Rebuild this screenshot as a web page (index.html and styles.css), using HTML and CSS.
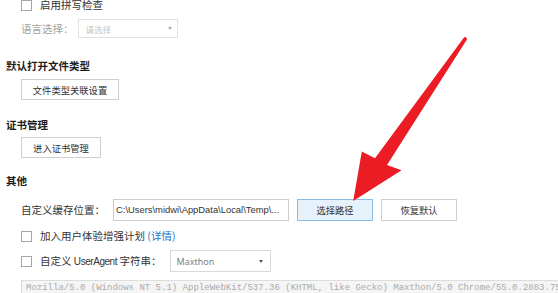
FILE: index.html
```html
<!DOCTYPE html>
<html lang="zh-CN">
<head>
<meta charset="utf-8">
<title>设置</title>
<link rel="stylesheet" href="styles.css">
</head>
<body>
<div class="page">
  <div class="check-row row-spell">
    <span class="checkbox"></span>
    <span class="label">启用拼写检查</span>
  </div>
  <div class="field-row lang-row">
    <span class="label muted">语言选择：</span>
    <div class="select select-disabled">
      <span class="select-text">请选择</span>
      <span class="caret"></span>
    </div>
  </div>

  <div class="heading h-first">默认打开文件类型</div>
  <div class="btn-row"><button class="btn btn-wide">文件类型关联设置</button></div>

  <div class="heading">证书管理</div>
  <div class="btn-row"><button class="btn btn-cert">进入证书管理</button></div>

  <div class="heading h-other">其他</div>
  <div class="field-row cache-row">
    <span class="label">自定义缓存位置：</span>
    <div class="path-input">C:\Users\midwi\AppData\Local\Temp\...</div>
    <button class="btn btn-path btn-primary">选择路径</button>
    <button class="btn btn-path">恢复默认</button>
  </div>
  <div class="check-row row-plan">
    <span class="checkbox"></span>
    <span class="label">加入用户体验增强计划 <a class="link">(详情)</a></span>
  </div>
  <div class="check-row row-ua">
    <span class="checkbox"></span>
    <span class="label">自定义 <span class="latin">UserAgent</span> 字符串：</span>
    <div class="select select-ua">
      <span class="select-text">Maxthon</span>
      <span class="caret caret-dark"></span>
    </div>
  </div>
  <div class="ua-box">Mozilla/5.0 (Windows NT 5.1) AppleWebKit/537.36 (KHTML, like Gecko) Maxthon/5.0 Chrome/55.0.2883.75 Safari/537.36</div>
</div>

<svg class="arrow" width="558" height="293" viewBox="0 0 558 293" aria-hidden="true">
  <path d="M463.6 37.9 A1.8 1.8 0 0 1 466.6 40.1 L387 165 L401.5 170.2 L353.2 201 L361.8 151.6 L375 158.2 Z" fill="#ec1c24"/>
</svg>
</body>
</html>
```

FILE: styles.css
```css
html, body {
  margin: 0;
  padding: 0;
  width: 558px;
  height: 293px;
  overflow: hidden;
  background: #ffffff;
}

body {
  position: relative;
  font-family: "Noto Sans CJK SC", "Noto Sans", sans-serif;
  font-size: 10.5px;
  color: #333333;
}

.page {
  display: flex;
  flex-direction: column;
  margin-top: -3px;
  padding-left: 6px;
}

.check-row {
  display: flex;
  align-items: center;
  height: 16px;
  padding-left: 15px;
}

.checkbox {
  width: 9px;
  height: 9px;
  border: 1px solid #a6a6a6;
  background: #fff;
  margin-right: 8px;
  flex: none;
}

.label {
  white-space: nowrap;
  line-height: 16px;
}

.latin {
  font-family: "Liberation Sans", sans-serif;
  font-size: 10px;
  letter-spacing: -0.45px;
}

.muted {
  color: #a3a3a3;
}

.link {
  color: #2a72c0;
}

.field-row {
  display: flex;
  align-items: center;
  padding-left: 15px;
}

.lang-row {
  margin-top: 6px;
  height: 19px;
}

.lang-row .label {
  margin-right: 4px;
}

.select {
  box-sizing: border-box;
  display: flex;
  align-items: center;
  justify-content: space-between;
  border: 1px solid #e2e2e2;
  background: #fff;
  font-family: "Noto Sans", "Noto Sans CJK SC", sans-serif;
}

.select-disabled {
  width: 100px;
  height: 19px;
  padding: 0 5px 0 7px;
  font-size: 8.5px;
  color: #c4c4c4;
}

.select-ua {
  width: 101px;
  height: 22px;
  padding: 0 7px 0 5px;
  margin-left: 9px;
  font-size: 9px;
  color: #808080;
  border-color: #d9d9d9;
}

.caret {
  width: 0;
  height: 0;
  border-left: 2.5px solid transparent;
  border-right: 2.5px solid transparent;
  border-top: 3px solid #aaaaaa;
}

.caret-dark {
  border-top-color: #555555;
}

.heading {
  height: 16px;
  line-height: 16px;
  font-weight: bold;
  color: #1e1e1e;
  margin-top: 17px;
}

.h-first {
  margin-top: 20px;
}

.h-other {
  margin-top: 15px;
}

.btn-row {
  display: flex;
  padding-left: 15px;
  margin-top: 4px;
}

.h-first + .btn-row {
  margin-top: 5px;
}

.btn {
  box-sizing: border-box;
  height: 21px;
  border: 1px solid #cfcfcf;
  background: #ffffff;
  font-family: "Noto Sans CJK SC", sans-serif;
  font-size: 9.3px;
  color: #333333;
  padding: 0;
  margin: 0;
}

.btn-wide {
  width: 98px;
}

.btn-cert {
  width: 80px;
}

.cache-row {
  margin-top: 10px;
  height: 22px;
}

.cache-row .label {
  margin-right: 8px;
}

.path-input {
  box-sizing: border-box;
  width: 176px;
  height: 22px;
  border: 1px solid #cdcdcd;
  padding-left: 2px;
  line-height: 20px;
  font-family: "Liberation Sans", sans-serif;
  font-size: 9.4px;
  color: #333;
  white-space: nowrap;
  overflow: hidden;
}

.btn-path {
  width: 76px;
  height: 22px;
  margin-left: 8px;
}

.btn-primary {
  background: #e5f1fb;
  border-color: #8cbbe0;
}

.row-plan {
  margin-top: 7px;
}

.row-ua {
  margin-top: 6px;
  height: 22px;
}

.ua-box {
  box-sizing: border-box;
  margin-top: 8px;
  margin-left: 15px;
  width: 600px;
  height: 40px;
  border: 1px solid #dddddd;
  background: #f5f5f5;
  padding: 2px 4px;
  font-family: "Liberation Mono", monospace;
  font-size: 9px;
  line-height: 11px;
  color: #ababab;
  white-space: nowrap;
  overflow: hidden;
}

.arrow {
  position: absolute;
  left: 0;
  top: 0;
  pointer-events: none;
}
```
